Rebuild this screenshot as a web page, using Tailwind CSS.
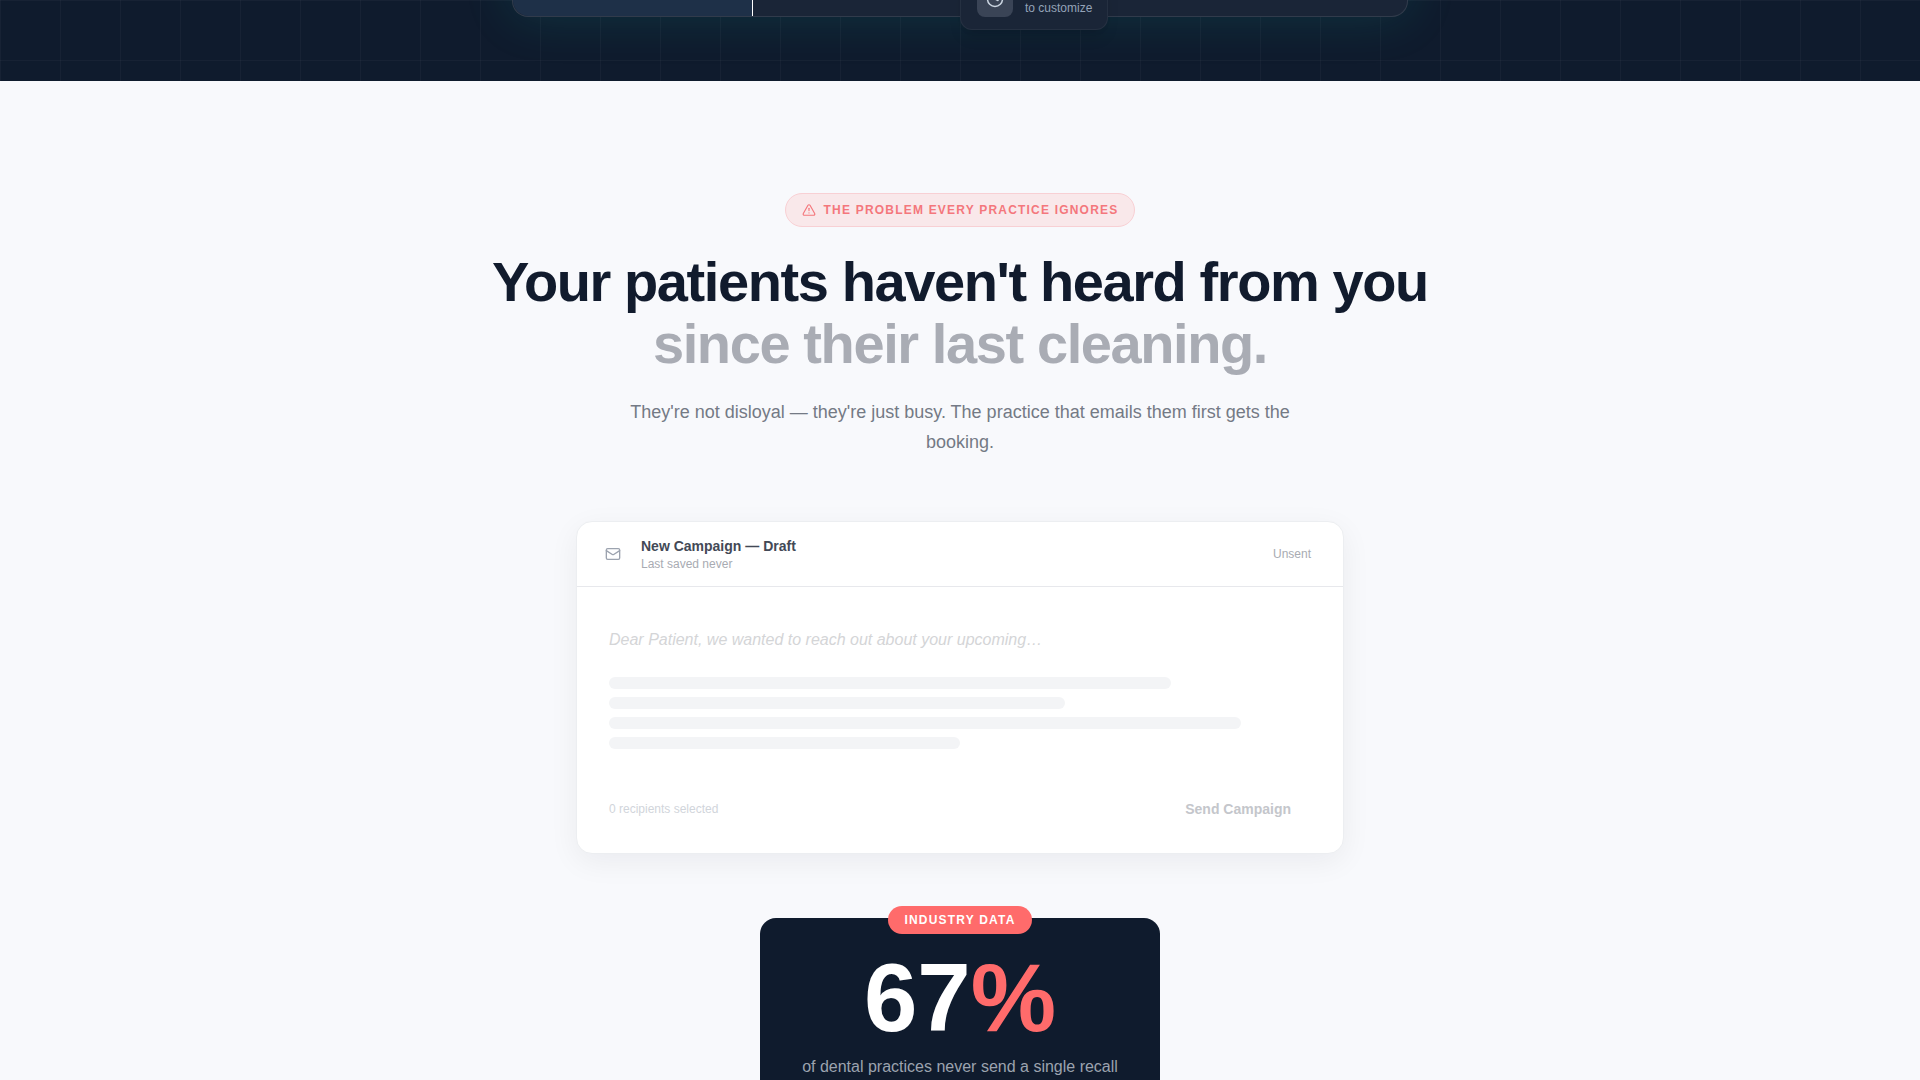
<!DOCTYPE html>
<html lang="en">
<head>
<meta charset="utf-8">
<script src="https://cdn.jsdelivr.net/npm/@tailwindcss/browser@4"></script>
<title>Recall</title>
</head>
<body class="h-screen overflow-hidden bg-[#f8f9fc] font-['Liberation_Sans',Arial,sans-serif]">
  <section class="h-[81px] overflow-hidden bg-[#0f1b2d] bg-[linear-gradient(rgba(255,255,255,0.03)_1px,transparent_1px),linear-gradient(90deg,rgba(255,255,255,0.03)_1px,transparent_1px)] bg-[size:60px_60px]">
    <div class="relative mx-auto -mt-[83px] flex h-[100px] w-[896px] rounded-2xl border border-white/10 bg-[#1a2537] shadow-[0_0_50px_rgba(20,184,166,0.16)]">
      <div class="h-full w-[240px] rounded-l-2xl border-r border-white bg-[#1e3048]"></div>
      <div class="absolute -bottom-[14px] left-[447px] flex h-[60px] w-[148px] items-end gap-3 rounded-xl border border-white/5 bg-[#1a2537] px-4 pb-3 shadow-lg">
        <div class="flex h-9 w-9 shrink-0 items-center justify-center rounded-lg bg-[#3a4456] text-[#cbd5e1]">
          <svg xmlns="http://www.w3.org/2000/svg" class="h-[18px] w-[18px]" viewBox="0 0 24 24" fill="none" stroke="currentColor" stroke-width="2" stroke-linecap="round" stroke-linejoin="round"><circle cx="12" cy="12" r="10"/><path d="M12 6v6l4 2"/></svg>
        </div>
        <p class="mb-px text-xs leading-4 whitespace-nowrap text-[#94a3b8]">to customize</p>
      </div>
    </div>
  </section>

  <main class="flex flex-col items-center pt-28">
    <div class="flex h-[34px] items-center gap-2 rounded-full border border-[#f8d0d4] bg-[#f9e8ea] px-4 text-xs font-bold tracking-[0.1em] text-[#f4777c]">
      <svg xmlns="http://www.w3.org/2000/svg" class="h-3.5 w-3.5" viewBox="0 0 24 24" fill="none" stroke="currentColor" stroke-width="2" stroke-linecap="round" stroke-linejoin="round"><path d="m21.73 18-8-14a2 2 0 0 0-3.48 0l-8 14A2 2 0 0 0 4 21h16a2 2 0 0 0 1.73-3"/><path d="M12 9v4"/><path d="M12 17h.01"/></svg>
      <span>THE PROBLEM EVERY PRACTICE IGNORES</span>
    </div>

    <h1 class="mt-6 text-center text-[56px] leading-[1.1] font-bold tracking-[-0.025em] text-[#111b2d]">
      Your patients haven't heard from you<br><span class="text-[#a9acb4]">since their last cleaning.</span>
    </h1>
    <p class="mt-6 w-[672px] text-center text-lg leading-[1.65] text-[#747a85]">They're not disloyal — they're just busy. The practice that emails them first gets the booking.</p>

    <div class="mt-[63px] w-[768px] rounded-2xl border border-[#eceef1] bg-white shadow-[0_8px_30px_rgba(15,23,42,0.06)]">
      <div class="flex h-[65px] items-center border-b border-[#e7e8ec] px-5">
        <div class="flex w-8 justify-center text-[#9ca3af]">
          <svg xmlns="http://www.w3.org/2000/svg" class="h-4 w-4" viewBox="0 0 24 24" fill="none" stroke="currentColor" stroke-width="2" stroke-linecap="round" stroke-linejoin="round"><rect x="2" y="4" width="20" height="16" rx="2"/><path d="m22 7-8.97 5.7a1.94 1.94 0 0 1-2.06 0L2 7"/></svg>
        </div>
        <div class="ml-3 flex-1">
          <p class="text-sm leading-5 font-semibold text-[#434956]">New Campaign — Draft</p>
          <p class="text-xs leading-4 text-[#a8abb2]">Last saved never</p>
        </div>
        <span class="pr-3 text-xs text-[#a8abb2]">Unsent</span>
      </div>
      <div class="px-8 pt-[41px] pb-[34px]">
        <p class="text-base leading-6 text-[#d4d5d7] italic">Dear Patient, we wanted to reach out about your upcoming…</p>
        <div class="mt-[25px] flex flex-col gap-2">
          <div class="h-3 w-[80%] rounded-full bg-[#f3f4f6]"></div>
          <div class="h-3 w-[65%] rounded-full bg-[#f3f4f6]"></div>
          <div class="h-3 w-[90%] rounded-full bg-[#f3f4f6]"></div>
          <div class="h-3 w-[50%] rounded-full bg-[#f3f4f6]"></div>
        </div>
        <div class="mt-[50px] flex items-center justify-between">
          <span class="text-xs text-[#d1d5db]">0 recipients selected</span>
          <span class="pr-5 text-sm font-semibold text-[#c4c6cb]">Send Campaign</span>
        </div>
      </div>
    </div>

    <div class="relative mt-16 flex w-[400px] flex-col items-center rounded-2xl bg-[#0f1b2d] px-8 pt-8 pb-10">
      <span class="absolute -top-3 flex h-7 items-center rounded-full bg-[#ff6b6b] px-4 text-xs font-bold tracking-[0.1em] text-white">INDUSTRY DATA</span>
      <p class="text-8xl leading-none font-bold text-white">67<span class="text-[#ff6b6b]">%</span></p>
      <p class="mt-[9px] text-center text-base leading-6 text-[#9ca3af]">of dental practices never send a single recall</p>
    </div>
  </main>
</body>
</html>
